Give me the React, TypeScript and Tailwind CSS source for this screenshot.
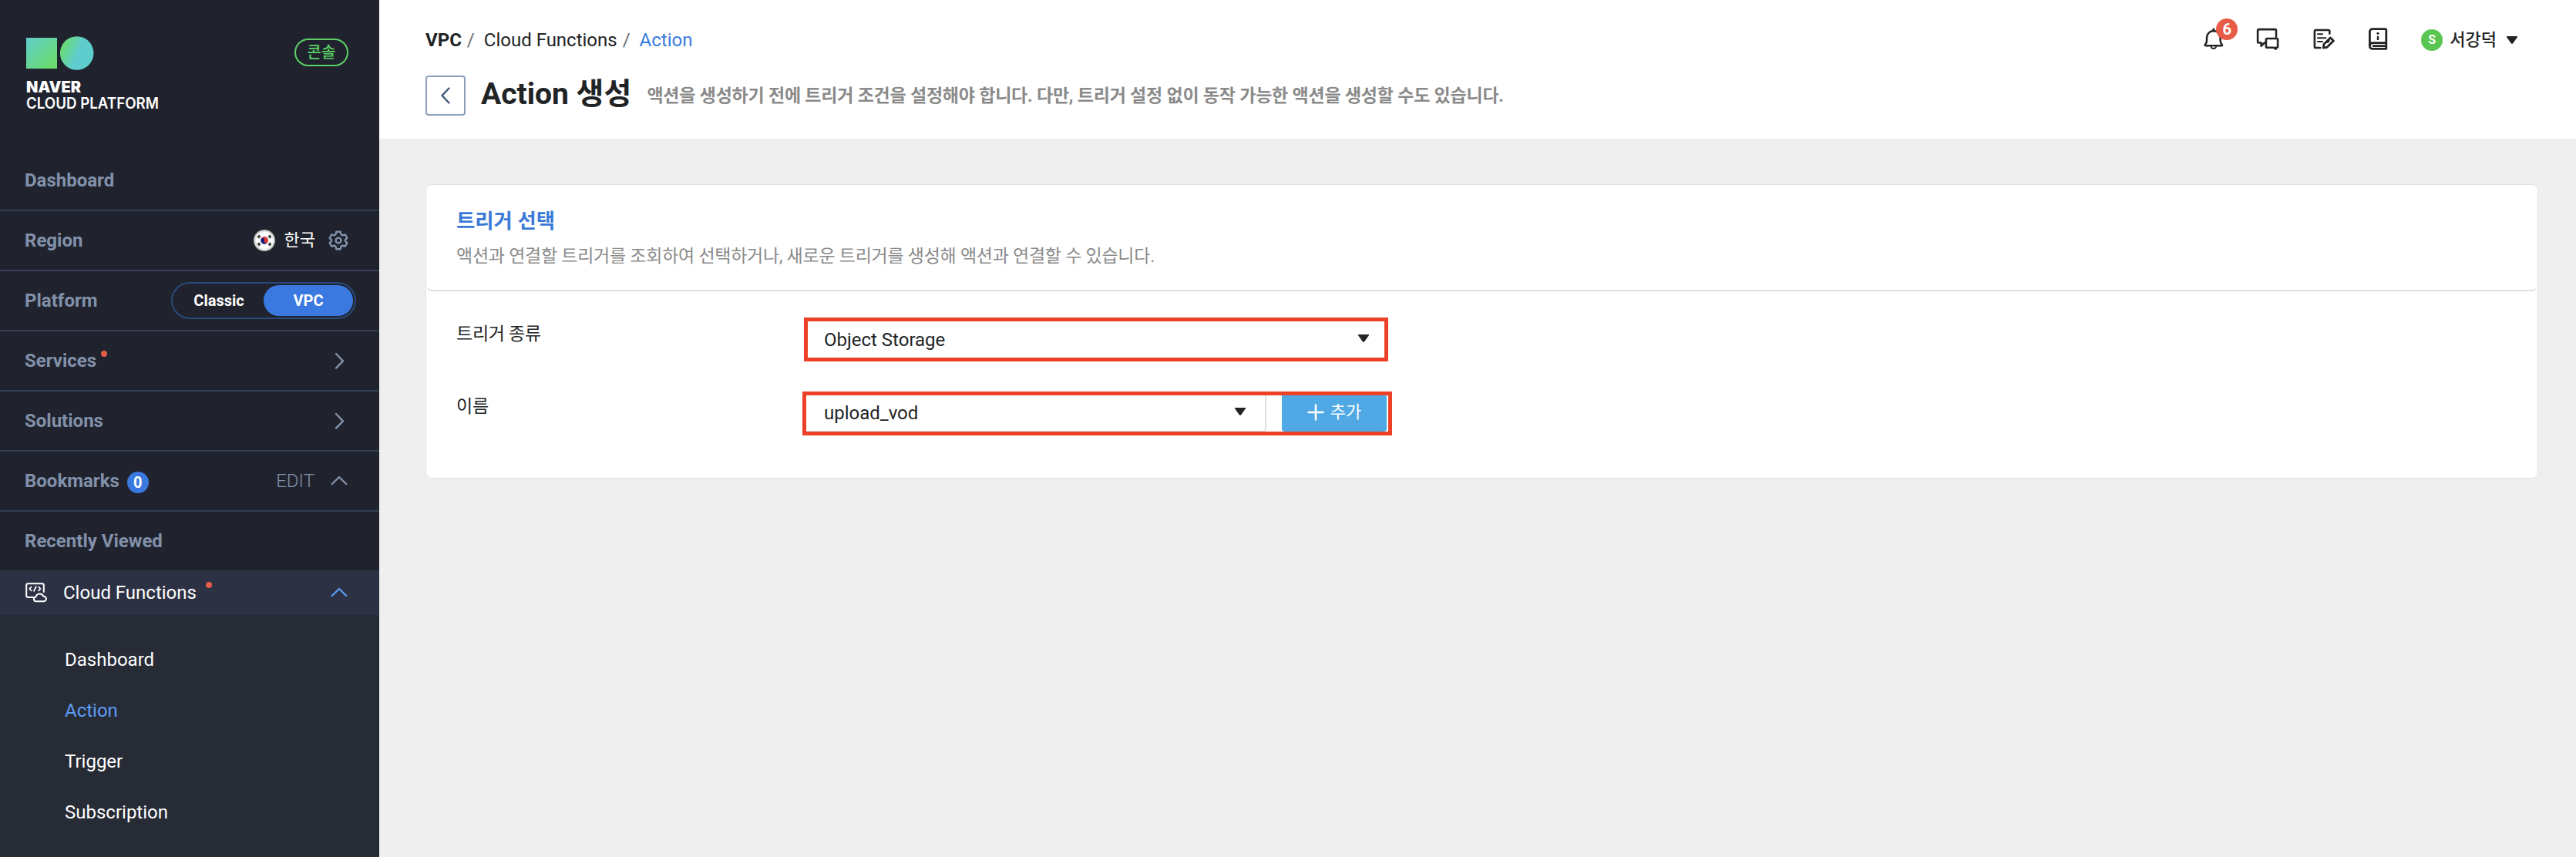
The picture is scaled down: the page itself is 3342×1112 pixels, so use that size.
import type { ReactNode } from "react";

const muted = "text-[#8291ab]";

function Chevron({ dir, className }: { dir: "right" | "up"; className: string }) {
  return (
    <svg width="24" height="24" viewBox="0 0 24 24" fill="none" stroke="currentColor" strokeWidth="2.4" strokeLinecap="round" strokeLinejoin="round" className={className}>
      {dir === "right" ? <path d="M8 3 17 12.3 8 21.6" /> : <path d="M2.8 16 12 7 21.2 16" />}
    </svg>
  );
}

function Caret({ className }: { className?: string }) {
  return (
    <svg width="16" height="12" viewBox="0 0 16 12" fill="#212325" className={className}>
      <path d="M1.6 1h12.8c.7 0 1 .7.5 1.2L9 10.4c-.5.6-1.5.6-2 0L1.1 2.2C.6 1.7.9 1 1.6 1Z" />
    </svg>
  );
}

function NavRow({ label, children, last, extra }: { label: string; children?: ReactNode; last?: boolean; extra?: ReactNode }) {
  return (
    <div className={`flex shrink-0 items-center pl-8 ${last ? "h-[76px]" : "h-[78px] border-b-2 border-[#343e54]"}`}>
      <span className={`text-2xl/[28px] font-bold ${muted}`}>{label}</span>
      {extra}
      {children && <div className="ml-auto flex items-center">{children}</div>}
    </div>
  );
}

function Logo() {
  return (
    <svg width="180" height="104" viewBox="0 0 180 104" className="overflow-visible">
      <defs>
        <linearGradient id="sq" x1="0" y1="0" x2="1" y2="1">
          <stop offset="0" stopColor="#5fcdcd" />
          <stop offset="0.9" stopColor="#6adc6c" />
        </linearGradient>
        <linearGradient id="ci" x1="0" y1="0.2" x2="1" y2="0.65">
          <stop offset="0.05" stopColor="#6adc6c" />
          <stop offset="0.55" stopColor="#5fcdcd" />
        </linearGradient>
      </defs>
      <rect x="0" y="2" width="40" height="40" fill="url(#sq)" />
      <circle cx="65.7" cy="22" r="21.8" fill="url(#ci)" />
      <text x="0" y="72.5" textLength="71" lengthAdjust="spacingAndGlyphs" fill="#fff" className="font-['Inter'] text-[19.5px] font-black">NAVER</text>
      <text x="0" y="93.7" textLength="172" lengthAdjust="spacingAndGlyphs" fill="#fff" className="font-['Inter'] text-[19.5px] font-semibold">CLOUD PLATFORM</text>
    </svg>
  );
}

function Flag() {
  return (
    <svg width="28" height="28" viewBox="0 0 28 28">
      <defs>
        <radialGradient id="fl">
          <stop offset="0.75" stopColor="#fff" />
          <stop offset="1" stopColor="#b0b0b0" />
        </radialGradient>
      </defs>
      <circle cx="14" cy="14" r="14" fill="url(#fl)" />
      <g transform="rotate(20 14 14)">
        <circle cx="14" cy="14" r="4.8" fill="#1b1b7c" />
        <path d="M9.2 14a4.8 4.8 0 0 1 9.6 0 2.4 2.4 0 0 1-4.8 0 2.4 2.4 0 0 0-4.8 0Z" fill="#e03a2f" />
      </g>
      <g stroke="#444" strokeWidth="3.4">
        <path d="M5.8 10.8 8.2 7.6M19.8 7.6l2.4 3.2M5.8 17.2l2.4 3.2M19.8 20.4l2.4-3.2" />
      </g>
    </svg>
  );
}

function Gear() {
  return (
    <svg width="26" height="26" viewBox="0 0 26 26" fill="none" stroke="#8291ab" strokeWidth="2.4" strokeLinejoin="round">
      <path d="M10.3 1.8h5.4l.8 3.5 2 1.15 3.3-1.05 2.6 4.5-2.5 2.3v1.6l2.5 2.3-2.6 4.5-3.3-1.05-2 1.15-.8 3.5h-5.4l-.8-3.5-2-1.15-3.3 1.05-2.6-4.5 2.5-2.3v-1.6l-2.5-2.3 2.6-4.5 3.3 1.05 2-1.15Z" />
      <circle cx="13" cy="13" r="3.4" />
    </svg>
  );
}

function CloudFunctionsIcon() {
  return (
    <svg width="28" height="26" viewBox="0 0 28 26" fill="none" stroke="#fff" strokeWidth="2" strokeLinecap="round" strokeLinejoin="round">
      <path d="M10 19H3.5A2.3 2.3 0 0 1 1.2 16.7V3.5A2.3 2.3 0 0 1 3.5 1.2h18A2.3 2.3 0 0 1 23.8 3.5V12" />
      <path d="M7.6 5.6 5.3 8l2.3 2.4M17.2 5.6 19.5 8l-2.3 2.4M13.8 5.2 11 10.8" strokeWidth="1.8" />
      <path d="M14 24.2a2.9 2.9 0 0 1-.4-5.8 5.2 5.2 0 0 1 9.8-.6A3.2 3.2 0 0 1 24 24.2Z" />
    </svg>
  );
}

function BellIcon() {
  return (
    <svg width="26" height="30" viewBox="0 0 26 30" fill="none" stroke="#212325" strokeWidth="2.5" strokeLinejoin="round" strokeLinecap="round">
      <path d="M4 16.5V13a8.8 9 0 0 1 17.6 0v3.5c0 2.2.7 4 2 5.2.6.6.4 1.6-.5 1.6H2.5c-.9 0-1.1-1-.5-1.6 1.3-1.2 2-3 2-5.2Z" />
      <path d="M12.8 2v2" strokeWidth="3" />
      <path d="M9.3 24.5a3.6 3.6 0 0 0 7 0Z" fill="#212325" strokeWidth="1.4" />
      <path d="M11.4 25h2.8" stroke="#fff" strokeWidth="1.3" />
    </svg>
  );
}

function ChatIcon() {
  return (
    <svg width="30" height="30" viewBox="0 0 30 30" fill="none" stroke="#212325" strokeWidth="2.6" strokeLinejoin="round" strokeLinecap="round">
      <path d="M26 12V3.4A1.3 1.3 0 0 0 24.7 2.1H3.4A1.3 1.3 0 0 0 2.1 3.4V18.5c0 .6.4 1 1 1H6.7v4.2l4.2-4.2" />
      <path d="M14.2 14h12.6A1.3 1.3 0 0 1 28.1 15.3V24.4A1.3 1.3 0 0 1 26.8 25.7h-1.3V27.8l-2.6-2.1H14.2a1.3 1.3 0 0 1-1.3-1.3V15.3A1.3 1.3 0 0 1 14.2 14Z" />
    </svg>
  );
}

function NoteIcon() {
  return (
    <svg width="28" height="28" viewBox="0 0 28 28" fill="none" stroke="#212325" strokeWidth="2.6" strokeLinejoin="round" strokeLinecap="round">
      <path d="M21.3 6.6V3.3A1.3 1.3 0 0 0 20 2H3.2A1.3 1.3 0 0 0 1.9 3.3V23.7A1.3 1.3 0 0 0 3.2 25H9.3" />
      <path d="M6 7.3H12M6 12.3H16.3M6 17H12" strokeWidth="2.1" />
      <path d="m13.3 25 .5-4.6 8.6-8.4 4 4-8.7 8.4Z" strokeWidth="2.8" />
      <path d="m18.7 18 2.2-2.2" strokeWidth="1.8" />
    </svg>
  );
}

function BookIcon() {
  return (
    <svg width="26" height="30" viewBox="0 0 26 30" fill="none" stroke="#212325" strokeWidth="2.8" strokeLinejoin="round" strokeLinecap="round">
      <path d="M2.4 24V5A3.3 3.3 0 0 1 5.7 1.7H22.6a1.2 1.2 0 0 1 1.2 1.2V27.3H5.6A3.2 3.2 0 0 1 2.4 24Z" />
      <path d="M2.8 22.5A3 3 0 0 1 5.7 19.6H23.6M7 23.6H23" />
      <path d="M13 10.8v5.2" strokeWidth="2.4" strokeLinecap="butt" />
      <circle cx="13" cy="7.3" r="1.6" fill="#212325" stroke="none" />
    </svg>
  );
}

function Sidebar() {
  return (
    <aside className="flex h-full w-[492px] shrink-0 flex-col bg-[#20232d]">
      <div className="flex h-[196px] shrink-0 items-start justify-between pt-[47px] pr-10 pl-[34px]">
        <Logo />
        <div className="mt-[3px] flex h-9 w-[70px] items-center justify-center rounded-full border-2 border-[#5bd066] text-xl/[20px] font-medium text-[#5bd066]">콘솔</div>
      </div>
      <NavRow label="Dashboard" />
      <NavRow label="Region">
        <Flag />
        <span className="ml-3 text-[22px]/[28px] text-white">한국</span>
        <span className="mr-10 ml-[17px]"><Gear /></span>
      </NavRow>
      <NavRow label="Platform">
        <div className="mr-[30px] flex h-12 w-[240px] rounded-full border-2 border-[#284a7c] p-0.5 text-xl/[40px] font-bold text-white">
          <span className="w-[116px] text-center">Classic</span>
          <span className="w-[116px] rounded-full bg-[#3a7ae0] text-center">VPC</span>
        </div>
      </NavRow>
      <NavRow label="Services" extra={<span className="mb-[18px] ml-1.5 size-2 rounded-full bg-[#e65c46]" />}>
        <Chevron dir="right" className="mr-10 text-[#8291ab]" />
      </NavRow>
      <NavRow label="Solutions">
        <Chevron dir="right" className="mr-10 text-[#8291ab]" />
      </NavRow>
      <NavRow label="Bookmarks" extra={<span className="mt-1 ml-2.5 size-7 rounded-full bg-[#3a7ae0] text-center text-xl/[28px] font-bold text-white">0</span>}>
        <span className={`mr-5 text-2xl/[28px] font-light ${muted}`}>EDIT</span>
        <Chevron dir="up" className="mr-10 text-[#8291ab]" />
      </NavRow>
      <NavRow label="Recently Viewed" last />
      <div className="flex h-[58px] shrink-0 items-center bg-[#2d3144] pr-10 pl-[33px]">
        <CloudFunctionsIcon />
        <span className="ml-[21px] text-2xl/[28px] text-white">Cloud Functions</span>
        <span className="mb-5 ml-3 size-2 rounded-full bg-[#e65c46]" />
        <Chevron dir="up" className="ml-auto text-[#5c9df6]" />
      </div>
      <nav className="flex grow flex-col bg-[#272b35] pt-[25px] pl-[84px] text-2xl/[66px] text-white">
        <span>Dashboard</span>
        <span className="text-[#5c9df6]">Action</span>
        <span>Trigger</span>
        <span>Subscription</span>
      </nav>
    </aside>
  );
}

function Header() {
  return (
    <header className="h-[180px] shrink-0 bg-white pr-[75px] pl-[60px]">
      <div className="flex h-[98px] items-start justify-between">
        <div className="flex pt-[38px] text-2xl/[28px] text-[#212325]">
          <b>VPC</b>
          <span className="ml-[7px] text-[#6b7178]">/</span>
          <span className="ml-3">Cloud Functions</span>
          <span className="ml-[7px] text-[#6b7178]">/</span>
          <span className="ml-3 text-[#3a7ae0]">Action</span>
        </div>
        <div className="flex items-center pt-[36px] text-[#212325]">
          <div className="relative">
            <BellIcon />
            <span className="absolute -top-3 left-4 size-7 rounded-full bg-[#e65c46] text-center text-xl/[28px] font-bold text-white">6</span>
          </div>
          <span className="ml-[42px]"><ChatIcon /></span>
          <span className="ml-11"><NoteIcon /></span>
          <span className="ml-[43px]"><BookIcon /></span>
          <span className="mt-0.5 ml-[43px] size-7 rounded-full bg-[#59c651] text-center text-base/[28px] font-bold text-white">S</span>
          <span className="mt-0.5 ml-[9px] text-[22px]/[28px] font-medium">서강덕</span>
          <Caret className="mt-0.5 ml-3" />
        </div>
      </div>
      <div className="flex">
        <button className="flex size-[52px] items-center justify-center rounded border-2 border-[#8b9fbb]">
          <svg width="14" height="24" viewBox="0 0 14 24" fill="none" stroke="#3d5578" strokeWidth="2.4" strokeLinecap="round" strokeLinejoin="round">
            <path d="M11.5 2.5 2.5 12l9 9.5" />
          </svg>
        </button>
        <h1 className="ml-5 text-[39px]/[49px] font-bold text-[#212325]">Action 생성</h1>
        <p className="ml-5 text-[23px]/[54px] font-bold tracking-[-0.22px] text-[#8a8a8a]">액션을 생성하기 전에 트리거 조건을 설정해야 합니다. 다만, 트리거 설정 없이 동작 가능한 액션을 생성할 수도 있습니다.</p>
      </div>
    </header>
  );
}

function TriggerCard() {
  return (
    <section className="mr-[49px] ml-[60px] mt-[59px] h-[382px] rounded-lg border border-[#e2e2e2] bg-white">
      <div className="h-[138px] rounded-b-lg border-b-2 border-[#e0e1e3] pt-[29px] pl-[39px]">
        <h2 className="text-[26.4px]/[36px] font-bold text-[#3a7ad6]">트리거 선택</h2>
        <p className="mt-2.5 text-[23px]/[36px] tracking-[-0.26px] text-[#8a8a8a]">액션과 연결할 트리거를 조회하여 선택하거나, 새로운 트리거를 생성해 액션과 연결할 수 있습니다.</p>
      </div>
      <div className="flex items-start pt-[34px] pl-[39px] text-[#212325]">
        <span className="mt-1 w-[451px] text-[23px]/[36px] tracking-[-0.28px]">트리거 종류</span>
        <div className="flex h-[57px] w-[758px] items-center border-[5px] border-[#ec4126] pr-[19px] pl-[21px]">
          <span className="text-2xl/[28px]">Object Storage</span>
          <Caret className="mb-1 ml-auto" />
        </div>
      </div>
      <div className="flex items-start pt-[39px] pl-[39px] text-[#212325]">
        <span className="mt-0.5 w-[449px] text-[23px]/[36px] tracking-[-0.28px]">이름</span>
        <div className="flex h-[57px] w-[765px] border-[5px] border-[#ec4126]">
          <div className="flex h-[47px] w-[597px] items-center rounded-br border-r-2 border-b border-[#dcdee0] pr-6 pl-[23px]">
            <span className="text-2xl/[28px]">upload_vod</span>
            <Caret className="mb-1 ml-auto" />
          </div>
          <button className="ml-5 flex h-[47px] w-[136px] items-center justify-center rounded-b bg-[#50a9e4] pb-[3px] text-[22px]/[28px] text-white">
            <svg width="22" height="22" viewBox="0 0 22 22" stroke="currentColor" strokeWidth="2.6" strokeLinecap="round" className="mr-2">
              <path d="M11 1.5v19M1.5 11h19" />
            </svg>
            추가
          </button>
        </div>
      </div>
    </section>
  );
}

export default function App() {
  return (
    <div className="flex h-[1112px] w-[3342px] overflow-hidden bg-[#efefef] font-['Roboto','Noto_Sans_CJK_KR',sans-serif]">
      <Sidebar />
      <main className="flex min-w-0 grow flex-col">
        <Header />
        <TriggerCard />
      </main>
    </div>
  );
}
